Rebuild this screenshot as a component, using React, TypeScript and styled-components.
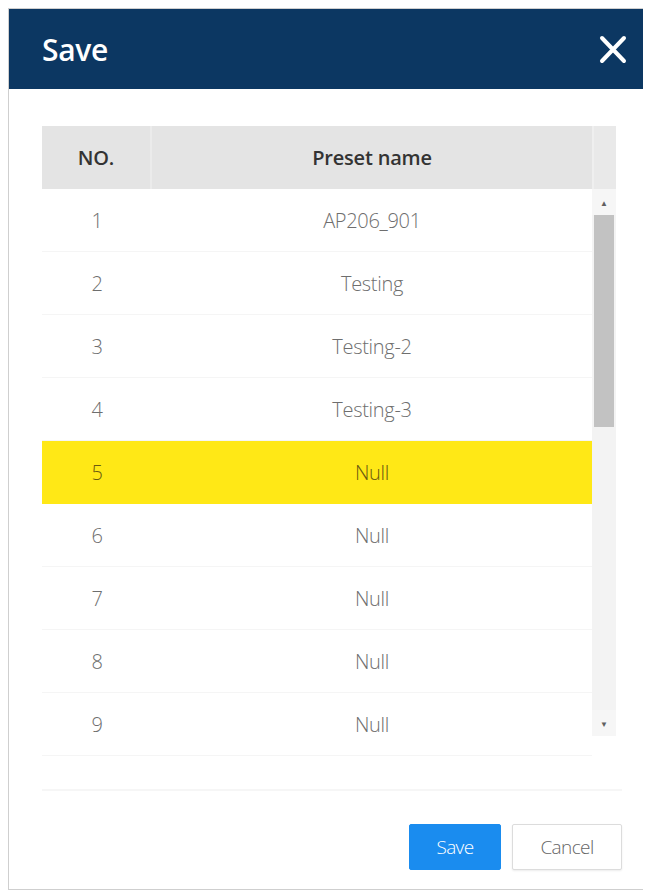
import styled, { createGlobalStyle } from "styled-components";

const GlobalStyle = createGlobalStyle`
  body {
    margin: 8px;
    background: #ffffff;
    font-family: "Open Sans", "Noto Sans", sans-serif;
  }
`;

const presets = [
  "AP206_901",
  "Testing",
  "Testing-2",
  "Testing-3",
  "Null",
  "Null",
  "Null",
  "Null",
  "Null",
];

function App() {
  const selected = 5;
  return (
    <>
      <GlobalStyle />
      <Dialog>
        <Header>
          <Title>Save</Title>
          <CloseButton aria-label="close">
            <svg width="28" height="29" viewBox="0 0 28 29">
              <path
                d="M3 3 L25 26 M25 3 L3 26"
                stroke="#ffffff"
                strokeWidth="4"
                strokeLinecap="round"
              />
            </svg>
          </CloseButton>
        </Header>
        <Body>
          <Table>
            <HeadRow>
              <HeadCell divider>NO.</HeadCell>
              <HeadCell>Preset name</HeadCell>
              <HeadSpacer />
            </HeadRow>
            <ScrollArea>
              <Rows>
                {presets.map((name, i) => (
                  <Row key={i} active={i + 1 === selected}>
                    <Cell>{i + 1}</Cell>
                    <Cell>{name}</Cell>
                  </Row>
                ))}
              </Rows>
              <Scrollbar>
                <Arrow>▲</Arrow>
                <Track>
                  <Thumb />
                </Track>
                <Arrow>▼</Arrow>
              </Scrollbar>
            </ScrollArea>
          </Table>
        </Body>
        <Footer>
          <Button primary>Save</Button>
          <Button>Cancel</Button>
        </Footer>
      </Dialog>
    </>
  );
}

const Dialog = styled.div`
  width: 635px;
  height: 880px;
  border: 1px solid #cfcfcf;
  display: flex;
  flex-direction: column;
  background: #ffffff;
`;

const Header = styled.div`
  height: 80px;
  background: #0c3762;
  display: flex;
  align-items: center;
  justify-content: space-between;
  padding: 0 17px 0 33px;
  flex-shrink: 0;
`;

const Title = styled.h1`
  margin: 0;
  color: #ffffff;
  font-size: 30px;
  font-weight: 600;
  letter-spacing: -0.3px;
`;

const CloseButton = styled.button`
  background: none;
  border: none;
  padding: 0;
  display: flex;
  cursor: pointer;
`;

const Body = styled.div`
  padding: 37px 0 0 33px;
`;

const Table = styled.div`
  width: 574px;
  display: flex;
  flex-direction: column;
`;

const HeadRow = styled.div`
  display: grid;
  grid-template-columns: 110px 440px 24px;
  height: 63px;
  background: #e4e4e4;
`;

const HeadCell = styled.div<{ divider?: boolean }>`
  display: flex;
  align-items: center;
  justify-content: center;
  font-size: 20px;
  font-weight: 600;
  color: #333333;
  letter-spacing: -0.2px;
  border-right: ${(p) => (p.divider ? "2px solid #ebebeb" : "none")};
`;

const HeadSpacer = styled.div`
  background: #e9e9e9;
  border-left: 2px solid #efefef;
`;

const ScrollArea = styled.div`
  display: flex;
  height: 600px;
  width: 580px;
  border-bottom: 2px solid #f6f6f6;
`;

const Rows = styled.div`
  width: 550px;
  display: flex;
  flex-direction: column;
`;

const Row = styled.div<{ active?: boolean }>`
  display: grid;
  grid-template-columns: 110px 1fr;
  height: 62px;
  flex-shrink: 0;
  background: ${(p) => (p.active ? "#ffe816" : "#ffffff")};
  border-bottom: 1px solid ${(p) => (p.active ? "#ffe816" : "#f5f5f5")};
  color: ${(p) => (p.active ? "#6a5a10" : "#6e6e6e")};
`;

const Cell = styled.div`
  display: flex;
  align-items: center;
  justify-content: center;
  font-size: 20px;
  font-weight: 300;
  letter-spacing: -0.3px;
`;

const Scrollbar = styled.div`
  width: 24px;
  height: 547px;
  background: #f3f3f3;
  display: flex;
  flex-direction: column;
  align-items: center;
`;

const Arrow = styled.div`
  height: 26px;
  width: 100%;
  display: flex;
  align-items: center;
  justify-content: center;
  font-size: 8px;
  color: #606060;
  background: #f6f6f6;
`;

const Track = styled.div`
  flex: 1;
  width: 100%;
  display: flex;
  justify-content: center;
`;

const Thumb = styled.div`
  width: 20px;
  height: 212px;
  background: #c2c2c2;
`;

const Footer = styled.div`
  flex: 1;
  display: flex;
  justify-content: flex-end;
  align-items: flex-start;
  gap: 11px;
  padding: 33px 22px 0 0;
`;

const Button = styled.button<{ primary?: boolean }>`
  height: 46px;
  min-width: ${(p) => (p.primary ? "92px" : "110px")};
  border-radius: 2px;
  font-family: "Open Sans", "Noto Sans", sans-serif;
  font-size: 19px;
  font-weight: 300;
  letter-spacing: -0.6px;
  cursor: pointer;
  border: 1px solid ${(p) => (p.primary ? "#1a8cef" : "#dcdcdc")};
  background: ${(p) => (p.primary ? "#1a8cef" : "#ffffff")};
  color: ${(p) => (p.primary ? "#ffffff" : "#666666")};
  box-shadow: ${(p) => (p.primary ? "none" : "0 1px 2px rgba(0,0,0,0.08)")};
`;

export default App;
